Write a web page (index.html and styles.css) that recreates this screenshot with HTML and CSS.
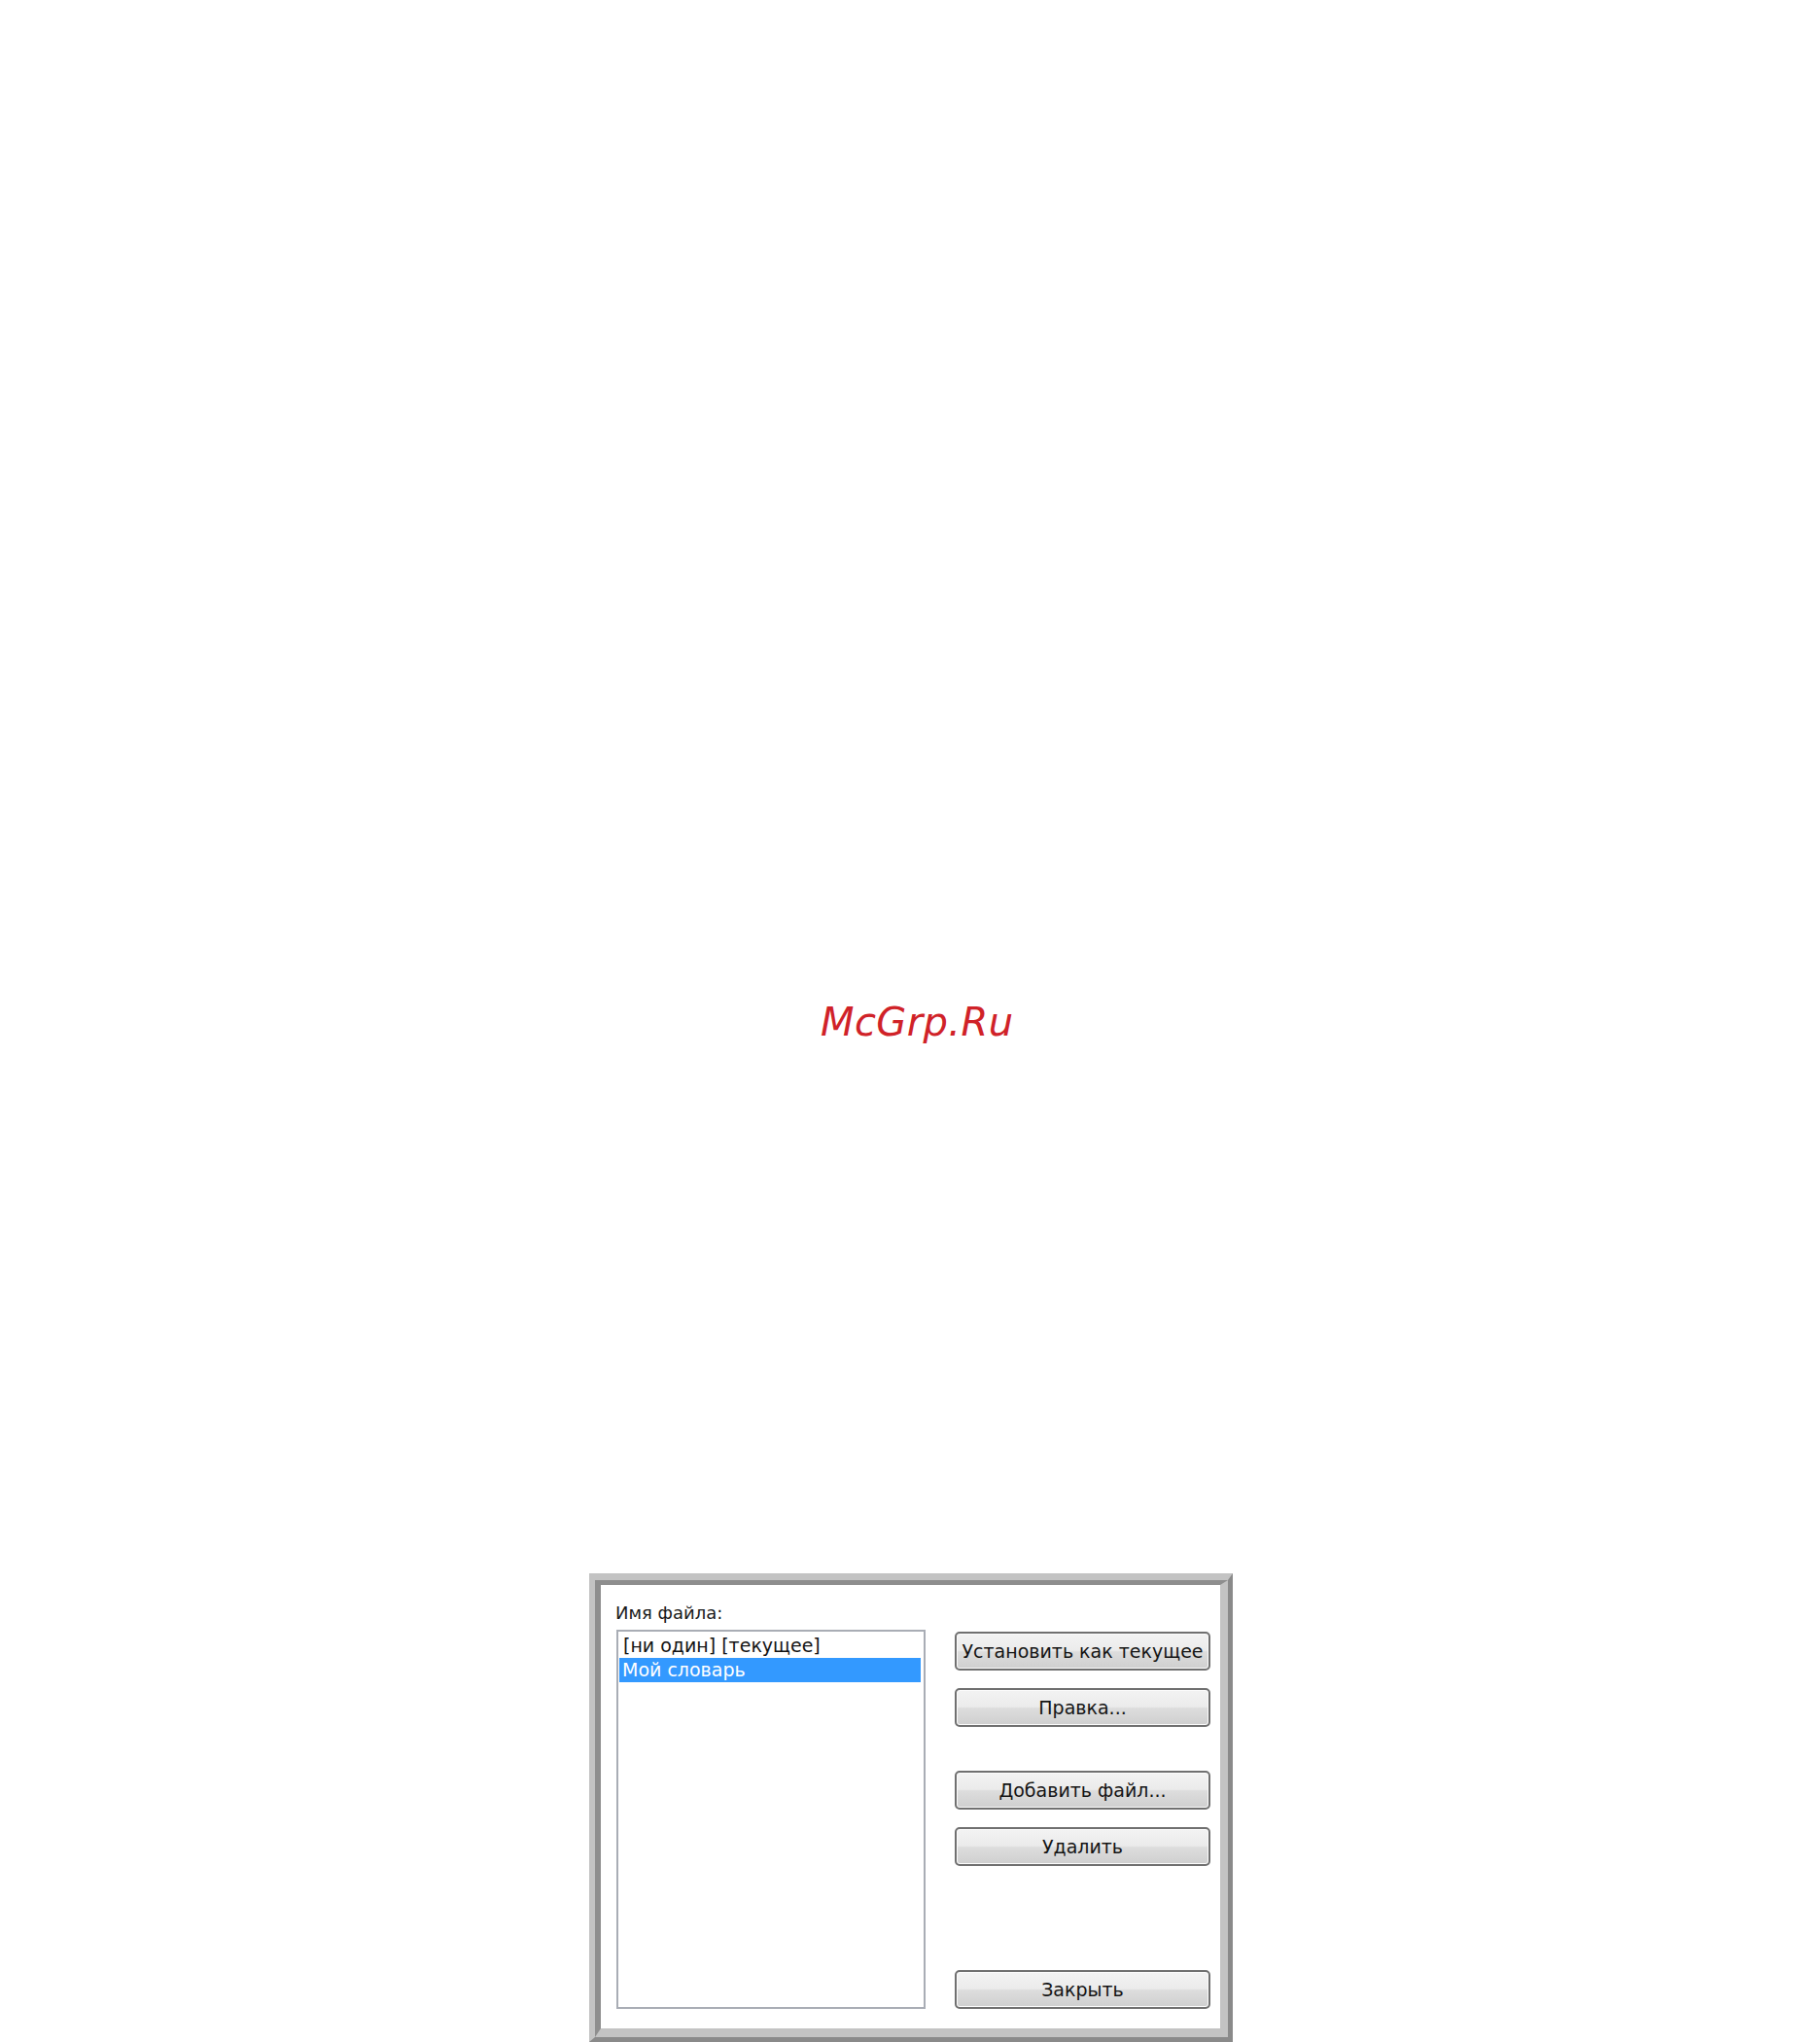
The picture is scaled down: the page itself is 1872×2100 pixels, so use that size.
FILE: index.html
```html
<!DOCTYPE html>
<html lang="ru">
<head>
<meta charset="utf-8">
<title>Словари</title>
<link rel="stylesheet" href="styles.css">
</head>
<body>
<main class="page">
  <div class="watermark">McGrp.Ru</div>
  <section class="dialog">
    <div class="dialog-inner">
      <div class="dialog-body">
        <div class="field-label">Имя файла:</div>
        <div class="listbox">
          <div class="list-item">[ни один] [текущее]</div>
          <div class="list-item selected">Мой словарь</div>
        </div>
        <div class="buttons">
          <button class="btn btn-first">Установить как текущее</button>
          <button class="btn btn-near">Правка...</button>
          <button class="btn btn-group">Добавить файл...</button>
          <button class="btn btn-near">Удалить</button>
          <button class="btn btn-last">Закрыть</button>
        </div>
      </div>
    </div>
  </section>
</main>
</body>
</html>
```

FILE: styles.css
```css
html, body {
  margin: 0;
  padding: 0;
  background: #ffffff;
}

body {
  overflow: hidden;
}

.page {
  width: 1872px;
  height: 2100px;
  display: flex;
  flex-direction: column;
  font-family: "DejaVu Sans", "Liberation Sans", sans-serif;
}

.watermark {
  margin-top: 1031px;
  padding-left: 844px;
  height: 40px;
  font-family: "DejaVu Sans", sans-serif;
  font-style: oblique;
  font-size: 40px;
  line-height: 40px;
  color: #d02228;
  letter-spacing: 0.4px;
}

.dialog {
  margin-top: 547px;
  margin-left: 606px;
  width: 662px;
  height: 482px;
  box-sizing: border-box;
  border-top: 7px solid #c3c3c3;
  border-left: 6px solid #c3c3c3;
  border-right: 5px solid #8a8a8a;
  border-bottom: 5px solid #8a8a8a;
  display: flex;
}

.dialog-inner {
  flex: 1;
  border-top: 5px solid #8e8e8e;
  border-left: 6px solid #8e8e8e;
  border-right: 8px solid #c3c3c3;
  border-bottom: 9px solid #c3c3c3;
  background: #ffffff;
  display: flex;
}

.dialog-body {
  flex: 1;
  padding: 18px 0 20px 16px;
  display: grid;
  grid-template-columns: 318px 263px;
  grid-template-rows: 22px 1fr;
  column-gap: 30px;
  row-gap: 6px;
  color: #1a1a1a;
  font-size: 19px;
}

.field-label {
  grid-column: 1;
  grid-row: 1;
  font-size: 18px;
  line-height: 22px;
  margin-left: -1px;
  color: #1a1a1a;
}

.listbox {
  grid-column: 1;
  grid-row: 2;
  box-sizing: border-box;
  border: 2px solid #a9adb5;
  padding: 2px 3px 0 1px;
  background: #ffffff;
}

.list-item {
  height: 25px;
  line-height: 25px;
  padding-left: 4px;
  white-space: nowrap;
  color: #141414;
}

.list-item.selected {
  background: #3399ff;
  color: #ffffff;
  padding-left: 3px;
}

.buttons {
  grid-column: 2;
  grid-row: 2;
  display: flex;
  flex-direction: column;
}

.btn {
  height: 40px;
  box-sizing: border-box;
  border: 2px solid #707070;
  border-radius: 5px;
  box-shadow: inset 0 0 0 1px #fbfbfb;
  background: linear-gradient(to bottom, #f3f3f3 0%, #ebebeb 48%, #dddddd 52%, #cfcfcf 100%);
  font-family: "DejaVu Sans", "Liberation Sans", sans-serif;
  font-size: 19px;
  color: #141414;
  padding: 0;
  text-align: center;
  line-height: 34px;
  white-space: nowrap;
}

.btn-first {
  margin-top: 2px;
}

.btn-near {
  margin-top: 18px;
}

.btn-group {
  margin-top: 45px;
}

.btn-last {
  margin-top: auto;
}
```
